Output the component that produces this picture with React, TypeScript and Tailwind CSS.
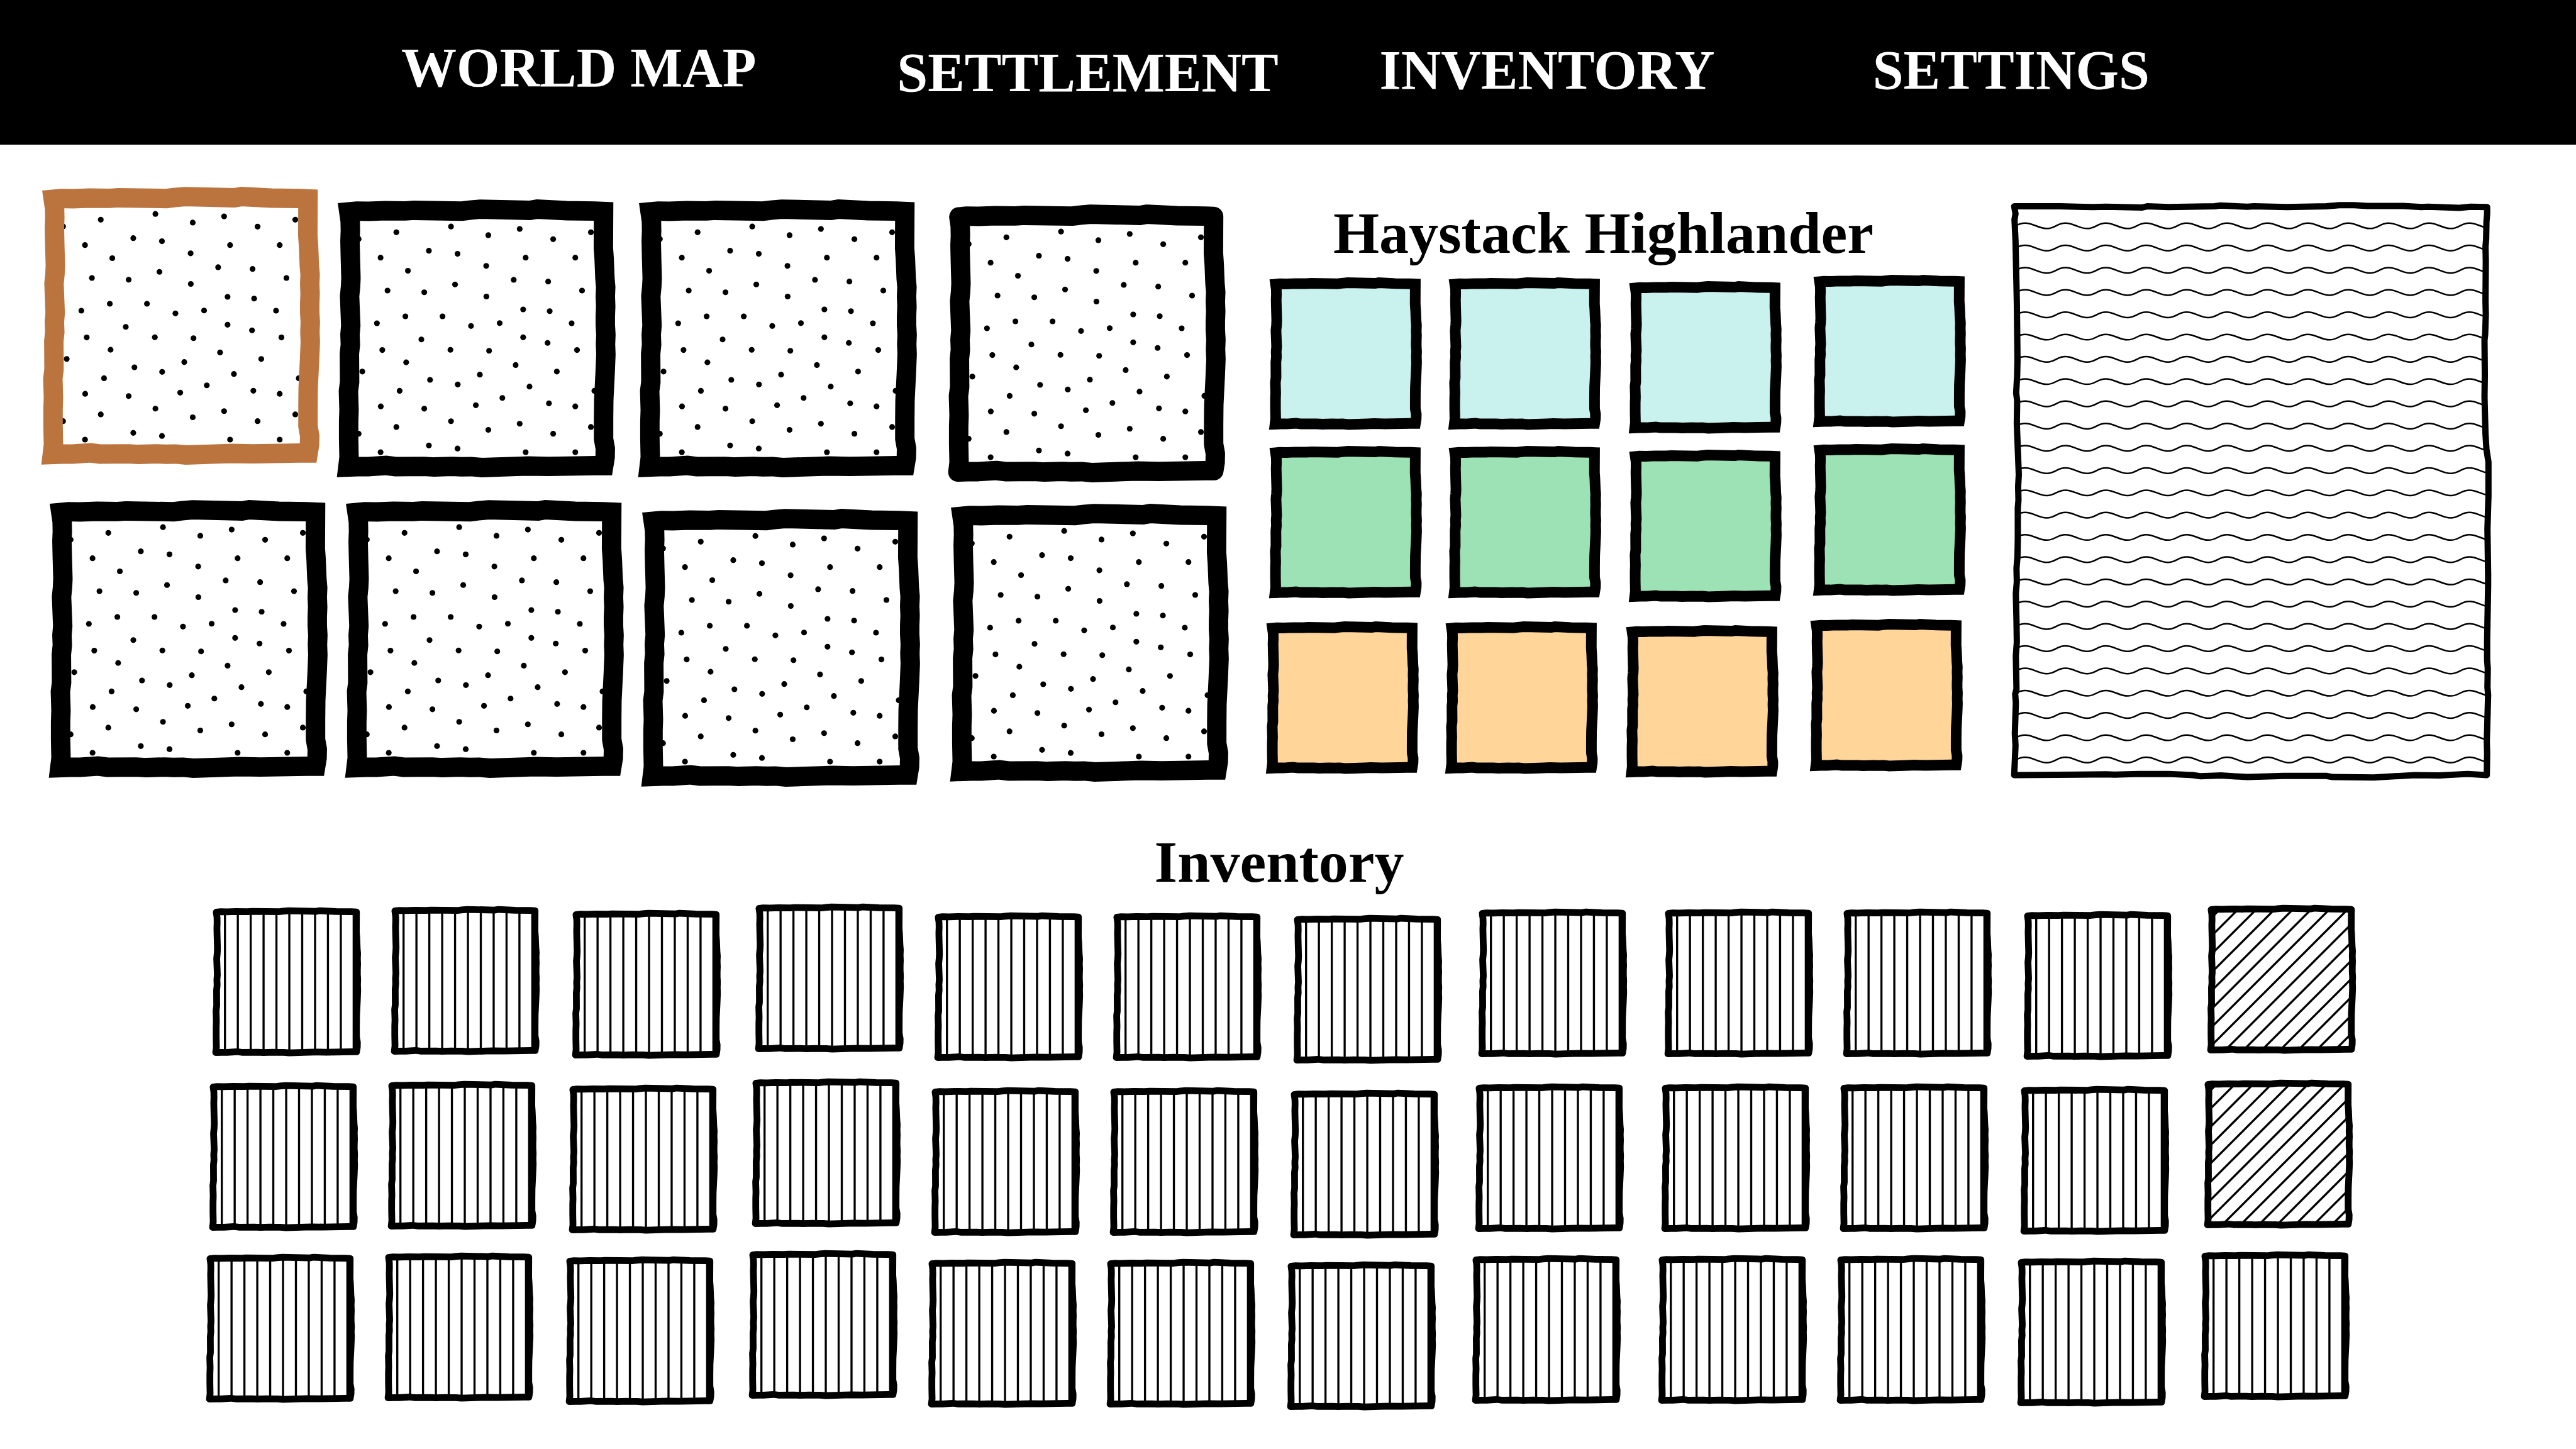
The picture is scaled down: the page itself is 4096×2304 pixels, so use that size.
import { useId } from "react";
import type { ReactNode } from "react";

const WOBBLY_SQUARE =
  "M111 112L152 108L212 109L300 106L404 107L450 104L699 108L740 103L795 98L1052 104L1090 98L1244 106L1390 108L1435 110" +
  "L1434 300L1438 356L1442 457L1446 503L1444 552L1446 603L1444 655L1444 700L1447 750L1445 800L1447 852L1443 950L1436 1090L1435 1190L1435 1292L1444 1342L1443 1388L1436 1431" +
  "L1390 1431L1148 1435L1042 1433L983 1435L801 1441L746 1436L696 1437L647 1435L555 1438L501 1435L353 1436L305 1430L212 1436L158 1436L106 1438" +
  "L112 1388L110 1290L110 1200L112 1143L109 1043L115 997L114 850L119 802L117 750L121 703L115 550L120 500L122 457L119 350L117 262L119 209L118 160Z";

const WOBBLY_PANEL =
  "M60 56L200 56L300 58L340 57L450 59L465 56L530 58L670 56L688 54L770 57L790 56L890 58L1010 56L1050 53L1095 53L1135 55L1245 55L1300 58L1320 57L1415 60L1450 57L1500 58" +
  "L1500 75L1498 95L1497 140L1495 160L1496 195L1495 300L1496 333L1494 385L1492 400L1493 490L1492 545L1495 640L1498 680L1504 712L1504 800L1501 885L1503 1000L1503 1030L1500 1170L1500 1220L1502 1243L1501 1290L1503 1310L1499 1430L1500 1460L1499 1516" +
  "L1440 1513L1355 1517L1280 1516L1155 1522L1030 1521L1010 1518L880 1518L850 1519L770 1521L690 1517L628 1519L605 1516L530 1513L440 1513L365 1515L340 1514L60 1516" +
  "L64 1440L62 1410L65 1330L63 1308L67 1295L65 1210L68 1175L67 1120L65 1050L68 1020L67 985L70 955L71 910L71 830L73 810L72 775L74 745L71 680L68 615L69 555L66 535L69 490L70 450L68 300L64 145L61 90L64 75Z";

const DOTS: [number, number][] = [
  [358, 218], [642, 188], [999, 201], [836, 233], [1173, 254], [1369, 218], [162, 253], [527, 314],
  [676, 330], [276, 350], [1030, 350], [1288, 350], [825, 393], [418, 418], [968, 465], [1147, 474],
  [663, 489], [312, 521], [1323, 521], [503, 530], [826, 552], [1017, 619], [1155, 628], [405, 655],
  [598, 655], [257, 691], [1269, 691], [746, 705], [895, 690], [488, 775], [1017, 764], [1144, 793],
  [285, 830], [639, 829], [840, 834], [1297, 830], [409, 894], [978, 908], [181, 942], [1192, 942],
  [792, 958], [533, 985], [677, 1009], [1050, 1020], [375, 1042], [1387, 1042], [909, 1079], [277, 1123],
  [503, 1135], [771, 1117], [1151, 1107], [1288, 1123], [642, 1200], [358, 1230], [836, 1245], [999, 1213],
  [1369, 1230], [162, 1265], [1173, 1265], [527, 1326], [676, 1342], [276, 1361], [1030, 1361], [1288, 1361],
];

const range = (n: number) => Array.from({ length: n }, (_, i) => i);

function Slot({ label, className, children }: { label: string; className: string; children: ReactNode }) {
  return (
    <div className={className}>
      <button type="button" aria-label={label} className="block cursor-pointer">
        {children}
      </button>
    </div>
  );
}

function HeroFrame({ color = "#000000", rounded = false }: { color?: string; rounded?: boolean }) {
  return (
    <svg viewBox="50 47 1448 1445" className="block h-auto w-[443px] overflow-visible" aria-hidden="true">
      {DOTS.map(([x, y]) => (
        <circle key={`${x}-${y}`} cx={x} cy={y} r="15" />
      ))}
      <path
        d={WOBBLY_SQUARE}
        fill="none"
        stroke={color}
        strokeWidth="101"
        strokeLinejoin={rounded ? "round" : "miter"}
      />
    </svg>
  );
}

function GearFrame({ fill }: { fill: string }) {
  return (
    <svg viewBox="50 47 1448 1445" className="block h-auto w-[243px] overflow-visible" aria-hidden="true">
      <path d={WOBBLY_SQUARE} fill={fill} stroke="#000000" strokeWidth="101" strokeLinejoin="miter" />
    </svg>
  );
}

function ItemFrame({ hatched }: { hatched: boolean }) {
  const clip = useId();
  return (
    <svg viewBox="76 68 1402 1404" className="block h-auto w-[236px] overflow-visible" aria-hidden="true">
      <clipPath id={clip}>
        <path d={WOBBLY_SQUARE} />
      </clipPath>
      <g clipPath={`url(#${clip})`} stroke="#000000" strokeWidth="20">
        {hatched
          ? range(15).map((i) => {
              const sum = 302 + i * 172.6;
              return <line key={i} x1={50} y1={sum - 50} x2={sum - 50} y2={50} />;
            })
          : range(11).map((i) => {
              const x = 193 + i * 121.6;
              return <line key={i} x1={x} y1={80} x2={x} y2={1450} />;
            })}
      </g>
      <path d={WOBBLY_SQUARE} fill="none" stroke="#000000" strokeWidth="64" strokeLinejoin="round" />
    </svg>
  );
}

function DescriptionPanel() {
  const clip = useId();
  const wave = "c26 0 40 14 66 14s31 -14 57 -14".repeat(13);
  return (
    <svg
      viewBox="51 43 1463 1487"
      preserveAspectRatio="none"
      className="min-h-0 w-full flex-1 overflow-visible"
      role="img"
      aria-label="Hero description"
    >
      <clipPath id={clip}>
        <path d={WOBBLY_PANEL} />
      </clipPath>
      <g clipPath={`url(#${clip})`} fill="none" stroke="#000000" strokeWidth="2.5">
        {range(25).map((i) => (
          <path key={i} d={`M-30 ${99 + i * 57.13}${wave}`} vectorEffect="non-scaling-stroke" />
        ))}
      </g>
      <path
        d={WOBBLY_PANEL}
        fill="none"
        stroke="#000000"
        strokeWidth="10"
        strokeLinejoin="round"
        vectorEffect="non-scaling-stroke"
      />
    </svg>
  );
}

const NAV = [
  { label: "WORLD MAP", href: "#world-map", drop: "pt-0" },
  { label: "SETTLEMENT", href: "#settlement", drop: "pt-2" },
  { label: "INVENTORY", href: "#inventory", drop: "pt-1" },
  { label: "SETTINGS", href: "#settings", drop: "pt-1" },
];

const GEAR_ROWS = [
  { name: "Armor", fill: "#c9f1ed", row: "mt-5 pl-[5px]" },
  { name: "Weapon", fill: "#9de2b5", row: "mt-4 pl-[5px]" },
  { name: "Trinket", fill: "#ffd599", row: "mt-6.5 pr-[5px]" },
];
const GEAR_DROPS = ["pt-1", "pt-1", "pt-2.5", "pt-0"];

const ITEM_ROWS = [
  { row: "mt-5 pl-[338px] pr-[350px]", hatchedLast: true },
  { row: "mt-6 pl-[333px] pr-[355px]", hatchedLast: true },
  { row: "mt-4.5 pl-[328px] pr-[360px]", hatchedLast: false },
];
const ITEM_DROPS = [
  "pt-1.5", "pt-1", "pt-2.5", "pt-0", "pt-3.5", "pt-3.5",
  "pt-4.5", "pt-2", "pt-2", "pt-2", "pt-3", "pt-0.5",
];

export default function App() {
  return (
    <div className="min-h-screen bg-white font-['Liberation_Serif',serif] font-bold text-black">
      <header className="bg-black pt-16 pb-[70px]">
        <nav className="grid grid-cols-[788fr_767fr_784fr_1118fr] pl-[638px] text-[88px] leading-none text-white">
          {NAV.map((item) => (
            <div key={item.label} className={item.drop}>
              <a href={item.href} className="block whitespace-nowrap">
                {item.label}
              </a>
            </div>
          ))}
        </nav>
      </header>

      <main>
        <div className="grid grid-cols-[1947fr_1185fr_764fr] pl-[66px] pr-[134px]">
          <section aria-label="Heroes" className="pt-[67px]">
            <div className="grid grid-cols-[470fr_479fr_491fr_507fr] items-start">
              <Slot label="Hero 1" className="pt-0">
                <HeroFrame color="#bb743e" />
              </Slot>
              <Slot label="Hero 2" className="pt-5">
                <HeroFrame />
              </Slot>
              <Slot label="Hero 3" className="pt-5">
                <HeroFrame />
              </Slot>
              <Slot label="Hero 4" className="pt-7">
                <HeroFrame rounded />
              </Slot>
            </div>
            <div className="mt-7 grid grid-cols-[471fr_471fr_491fr_502fr] items-start pl-3">
              <Slot label="Hero 5" className="pt-0">
                <HeroFrame />
              </Slot>
              <Slot label="Hero 6" className="pt-0">
                <HeroFrame />
              </Slot>
              <Slot label="Hero 7" className="pt-3.5">
                <HeroFrame />
              </Slot>
              <Slot label="Hero 8" className="pt-1.5">
                <HeroFrame />
              </Slot>
            </div>
          </section>

          <section aria-labelledby="hero-name" className="pt-[93px]">
            <h2 id="hero-name" className="pr-28 text-center text-[94px] leading-none whitespace-nowrap">
              Haystack Highlander
            </h2>
            {GEAR_ROWS.map(({ name, fill, row }) => (
              <div key={name} className={`grid grid-cols-[285fr_287fr_293fr_315fr] items-start ${row}`}>
                {GEAR_DROPS.map((drop, i) => (
                  <Slot key={i} label={`${name} ${i + 1}`} className={drop}>
                    <GearFrame fill={fill} />
                  </Slot>
                ))}
              </div>
            ))}
          </section>

          <section aria-label="Description" className="flex flex-col pt-[90px] pb-2.5">
            <DescriptionPanel />
          </section>
        </div>

        <section aria-labelledby="inventory-title" className="mt-18">
          <h2 id="inventory-title" className="pr-7 text-center text-[94px] leading-none">
            Inventory
          </h2>
          {ITEM_ROWS.map(({ row, hatchedLast }, r) => (
            <div
              key={r}
              className={`grid grid-cols-[284fr_288fr_292fr_285fr_284fr_287fr_294fr_296fr_285fr_287fr_292fr_234fr] items-start ${row}`}
            >
              {ITEM_DROPS.map((drop, i) => (
                <Slot key={i} label={`Item ${r * 12 + i + 1}`} className={drop}>
                  <ItemFrame hatched={hatchedLast && i === 11} />
                </Slot>
              ))}
            </div>
          ))}
        </section>
      </main>
    </div>
  );
}
